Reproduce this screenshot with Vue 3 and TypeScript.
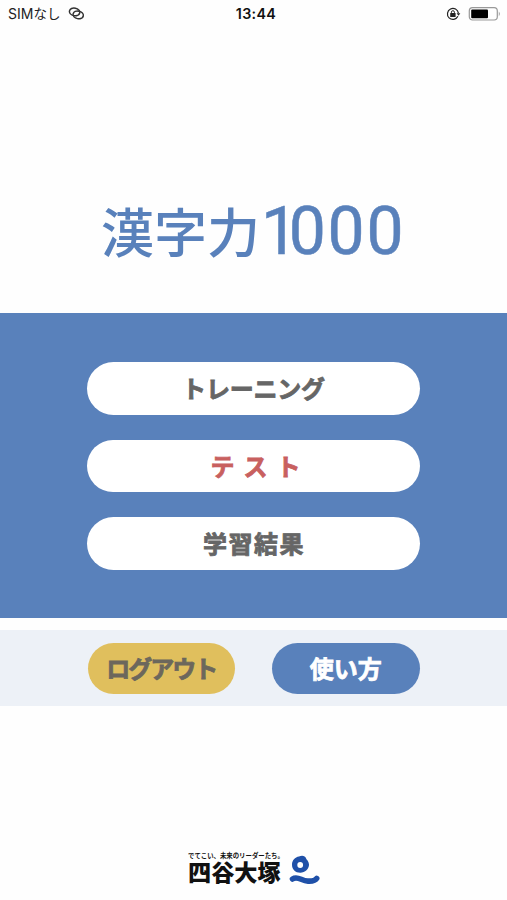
<script setup lang="ts">
interface MenuItem {
  label: string
  kind: 'training' | 'test' | 'result'
}

const menu: MenuItem[] = [
  { label: 'トレーニング', kind: 'training' },
  { label: 'テスト', kind: 'test' },
  { label: '学習結果', kind: 'result' },
]
</script>

<template>
  <div class="screen">
    <header class="status">
      <div class="carrier">
        <span>SIM<span class="kana">なし</span></span>
        <svg class="link" width="17" height="13" viewBox="0 0 17 13" fill="none" stroke="#333" stroke-width="1.5">
          <ellipse cx="6.6" cy="4.9" rx="5.2" ry="3.8" transform="rotate(12 6.6 4.9)" />
          <ellipse cx="10.2" cy="7.9" rx="5.2" ry="3.8" transform="rotate(12 10.2 7.9)" />
        </svg>
      </div>
      <span class="time">13:44</span>
      <div class="indicators">
        <svg width="15" height="14" viewBox="0 0 15 14" fill="none" stroke="#222">
          <path d="M11.9 9.3A5.5 5.5 0 1 1 12.4 6.2" stroke-width="1.2" />
          <path d="M10.6 6.2h3.7l-1.8 2.5z" fill="#222" stroke="none" />
          <rect x="4.2" y="6" width="5.4" height="4" rx=".5" fill="#222" stroke="none" />
          <path d="M5.4 6.5V5.2a1.5 1.5 0 0 1 3 0v1.3" stroke-width="1" />
        </svg>
        <svg width="33" height="14" viewBox="0 0 33 14">
          <rect x="1.3" y=".7" width="28" height="12.3" rx="3.2" fill="#fff" stroke="#999" stroke-width="1.2" />
          <rect x="3.2" y="2.6" width="16.8" height="8.6" rx="1" fill="#000" />
          <path d="M30.8 4.5q2 2.3 0 4.7z" fill="#999" />
        </svg>
      </div>
    </header>

    <h1 class="title"><span class="kanji">漢字力</span><span class="digits"><span class="one">1</span>000</span></h1>

    <nav class="menu">
      <button v-for="item in menu" :key="item.kind" class="pill" :class="item.kind">
        <span class="label">{{ item.label }}</span>
      </button>
    </nav>

    <div class="actions">
      <button class="action logout"><span class="label">ログアウト</span></button>
      <button class="action help"><span class="label">使い方</span></button>
    </div>

    <footer class="brand">
      <div class="brand-text">
        <span class="tagline">でてこい、未来のリーダーたち。</span>
        <span class="name">四谷大塚</span>
      </div>
      <svg class="mark" width="32" height="30" viewBox="0 0 32 30">
        <path
          fill="#1f50a8"
          fill-rule="evenodd"
          d="M11 1.6C13.5.1 17.3.5 18.1 3.4C18.4 4.6 20.8 5.9 21 9.2C21.2 14 17 17.7 12.3 17.7C7.4 17.7 4 14.3 4 9.7C4 5.5 7 2.2 11 1.6ZM12.2 7.1A2.9 2.9 0 1 0 12.2 12.9A2.9 2.9 0 1 0 12.2 7.1Z"
        />
        <path
          d="M4.5 24C10 20.5 13.5 26.2 20 26.1C24.5 26.3 27.5 25.5 28.7 23.4"
          fill="none"
          stroke="#1f50a8"
          stroke-width="5.6"
          stroke-linecap="round"
        />
      </svg>
    </footer>
  </div>
</template>

<style>
body {
  margin: 0;
  background: #fff;
}
</style>

<style scoped>
.screen {
  box-sizing: border-box;
  width: 507px;
  height: 900px;
  display: flex;
  flex-direction: column;
  overflow: hidden;
  background: #fefefe;
  font-family: "Noto Sans CJK JP", sans-serif;
}
.status {
  display: grid;
  grid-template-columns: 1fr auto 1fr;
  align-items: center;
  height: 27px;
  padding: 0 6px 0 8px;
  font-family: Inter, "Noto Sans CJK JP", sans-serif;
  font-size: 14px;
  line-height: 27px;
  color: #222;
}
.carrier {
  display: flex;
  align-items: center;
  gap: 8px;
}
.link {
  margin-top: -1px;
}
.kana {
  font-size: 13.5px;
}
.time {
  margin: -2px 0 0 3px;
  font-size: 14.3px;
  font-weight: 600;
  letter-spacing: 0.35px;
  color: #111;
}
.indicators {
  display: flex;
  justify-content: flex-end;
  align-items: center;
  gap: 7px;
  margin-top: -1px;
}
.title {
  display: flex;
  align-items: flex-start;
  height: 80px;
  margin: 159px 0 47px 101px;
  color: #5981bb;
  font-weight: 500;
  line-height: 80px;
  white-space: nowrap;
}
.kanji {
  margin-top: 4px;
  font-size: 53px;
}
.digits {
  margin: 6px 0 0 1px;
  font-family: Roboto, sans-serif;
  font-size: 66px;
  font-weight: 400;
  letter-spacing: 1.7px;
  -webkit-text-stroke: 0.5px #5981bb;
}
.one {
  margin-right: -11px;
}
.menu {
  box-sizing: border-box;
  display: flex;
  flex-direction: column;
  align-items: center;
  gap: 25px;
  height: 305px;
  padding-top: 49px;
  background: #5981bb;
}
.pill,
.action {
  display: flex;
  align-items: center;
  justify-content: center;
  border: 0;
  padding: 0;
  font-family: inherit;
  font-weight: 700;
  white-space: nowrap;
  line-height: 1;
}
.pill {
  width: 333px;
  height: 52.5px;
  flex: none;
  border-radius: 27px;
  background: #fff;
  color: #666;
  font-size: 24px;
}
.label {
  -webkit-text-stroke: 0.8px currentColor;
  stroke-linejoin: round;
}
.training {
  letter-spacing: -0.2px;
}
.test {
  box-sizing: border-box;
  padding-left: 13px;
  color: #c8605f;
  letter-spacing: 9px;
}
.result {
  padding-left: 1px;
  box-sizing: border-box;
  letter-spacing: 1.5px;
}
.actions {
  display: flex;
  align-items: center;
  justify-content: center;
  gap: 37px;
  height: 76px;
  margin-top: 12px;
  background: #edf1f7;
}
.action {
  width: 147.5px;
  height: 51px;
  border-radius: 26px;
  font-size: 24px;
}
.logout {
  background: #e0bf5d;
  color: #6c675c;
  letter-spacing: -2px;
}
.help {
  background: #5981bb;
  color: #fff;
}
.brand {
  display: flex;
  gap: 6px;
  margin: 146px 0 0 188px;
}
.brand-text {
  display: flex;
  flex-direction: column;
  gap: 1px;
  width: 94px;
  color: #111;
  white-space: nowrap;
}
.tagline {
  height: 7px;
  font-size: 6.4px;
  font-weight: 700;
  line-height: 7px;
}
.name {
  height: 22px;
  font-size: 23.2px;
  font-weight: 900;
  line-height: 22px;
}
.mark {
  margin-top: 3px;
}
</style>
